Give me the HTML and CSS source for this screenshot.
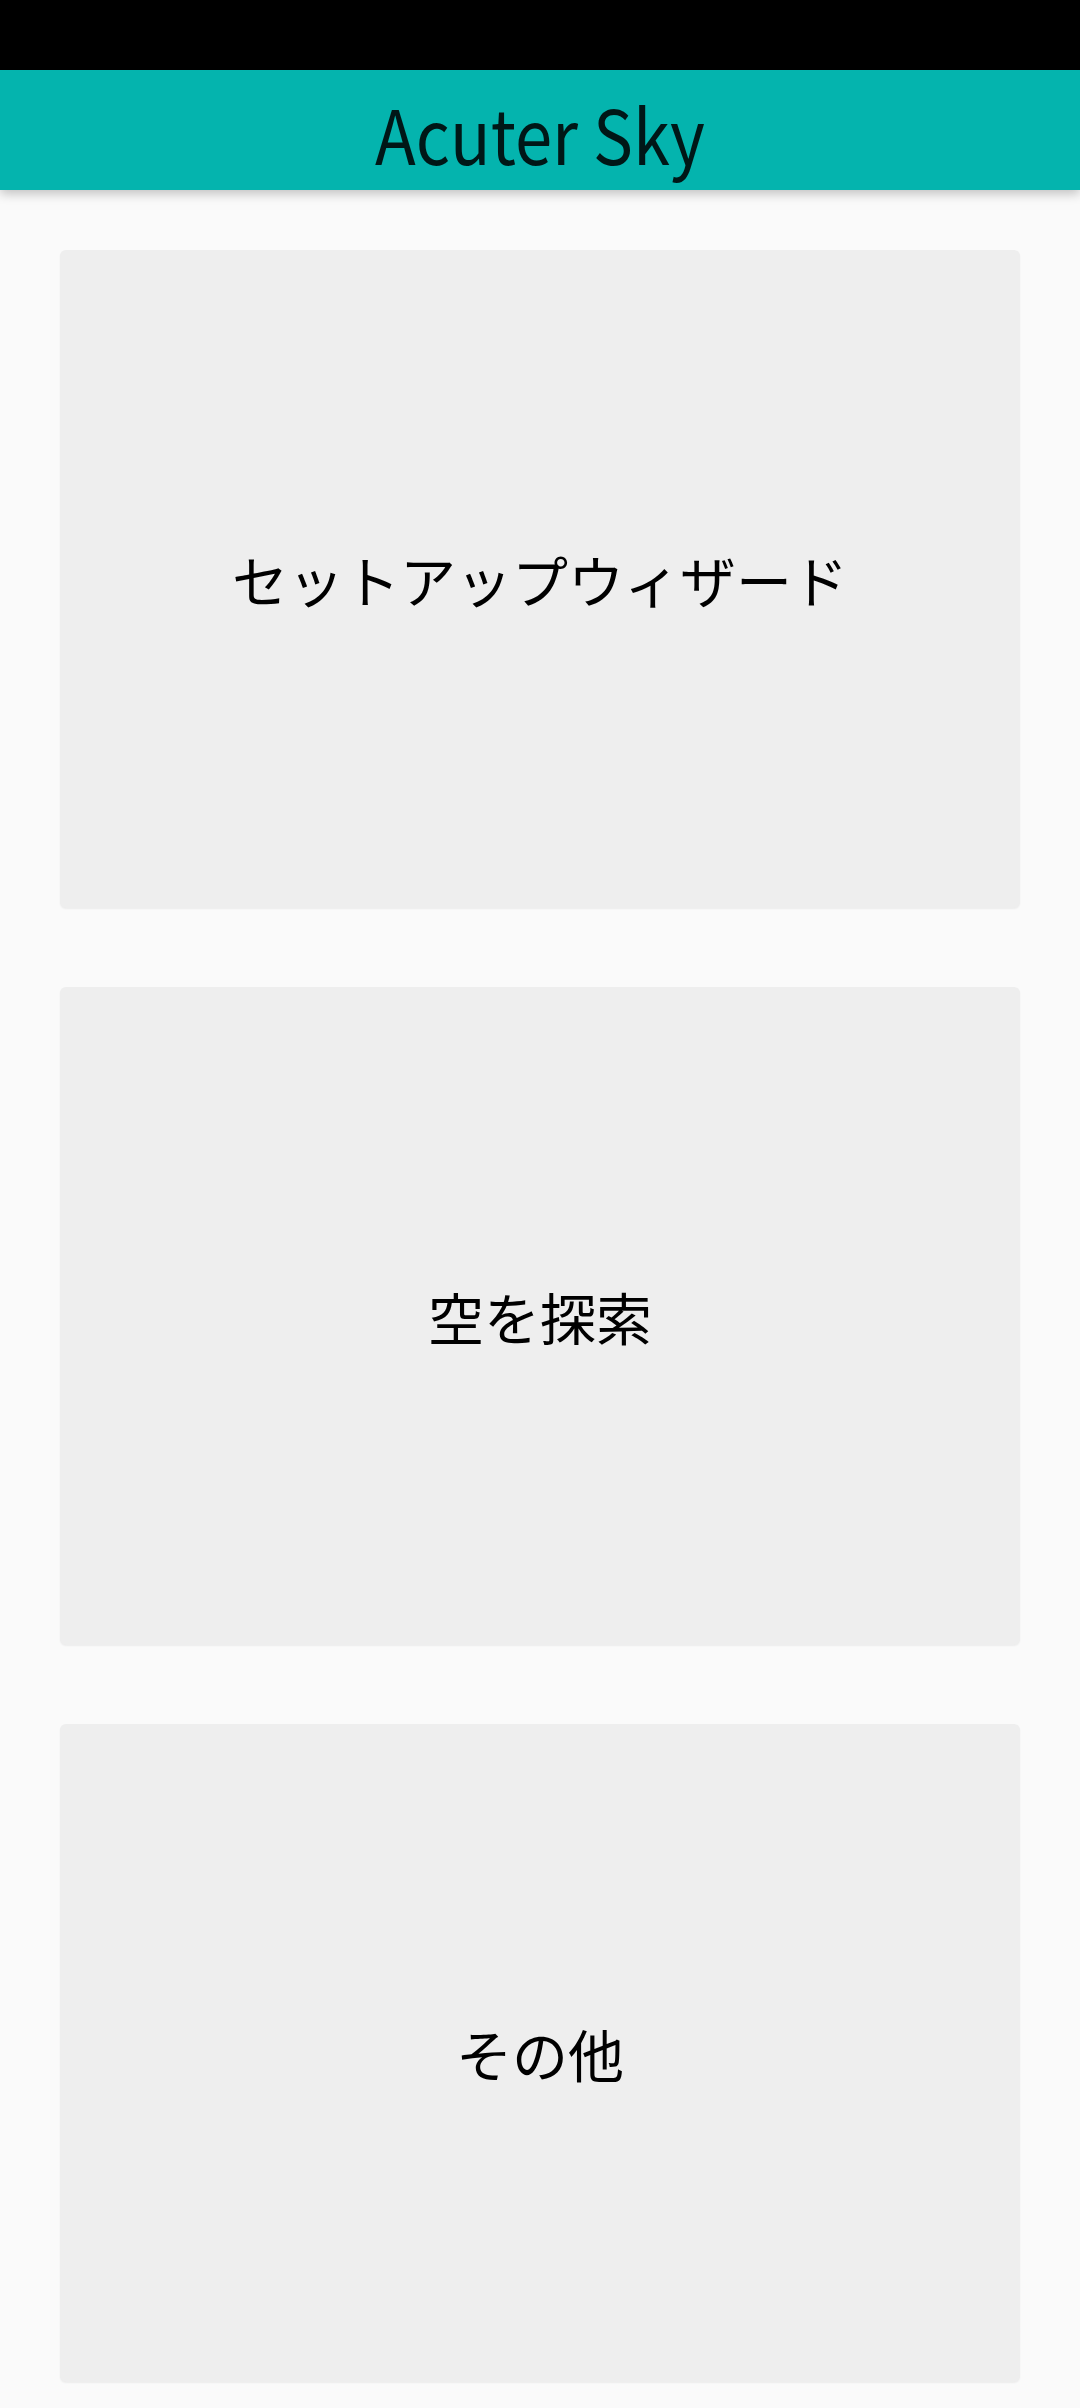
FILE: index.html
```html
<!DOCTYPE html>
<html lang="ja">
<head>
<meta charset="utf-8">
<title>Acuter Sky</title>
<link rel="stylesheet" href="styles.css">
</head>
<body>
<div class="status-bar"></div>
<header class="app-bar"><h1 class="title">Acuter Sky</h1></header>
<main class="menu">
  <div class="card"><span class="card-label">セットアップウィザード</span></div>
  <div class="card"><span class="card-label">空を探索</span></div>
  <div class="card"><span class="card-label">その他</span></div>
</main>
</body>
</html>
```
FILE: styles.css
```css
html, body {
  margin: 0;
  padding: 0;
  background: #fafafa;
  height: 2408px;
  overflow: hidden;
  font-family: "Noto Sans CJK JP", "Noto Sans", sans-serif;
}
.status-bar {
  height: 70px;
  background: #000;
}
.app-bar {
  position: relative;
  z-index: 2;
  height: 120px;
  background: #04b4ae;
  display: flex;
  align-items: center;
  justify-content: center;
  box-shadow: 0 4px 10px rgba(0, 0, 0, 0.22);
}
.title {
  margin: 0;
  font-weight: 400;
  font-size: 67px;
  line-height: 1;
  color: rgba(0, 0, 0, 0.87);
  transform: translateY(1px) scaleY(1.12);
}
.menu {
  padding: 60px 60px 0;
  display: flex;
  flex-direction: column;
  gap: 79px;
}
.card {
  height: 658px;
  background: #eeeeee;
  border-radius: 6px;
  box-shadow: 0 1px 2px rgba(0, 0, 0, 0.06);
  display: flex;
  align-items: center;
  justify-content: center;
}
.card-label {
  font-size: 56px;
  color: #000;
  line-height: 1;
}
```
